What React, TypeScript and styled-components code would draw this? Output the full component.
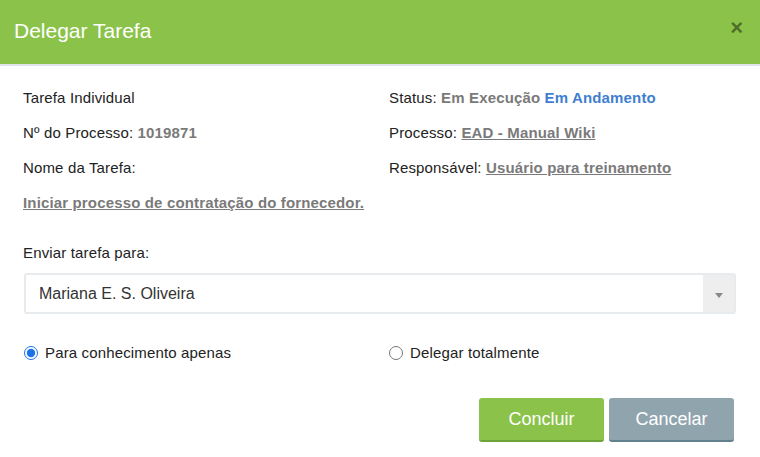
import React from "react";
import styled, { createGlobalStyle } from "styled-components";

const GlobalStyle = createGlobalStyle`
  html, body {
    margin: 0;
    padding: 0;
    background: #fff;
    font-family: "Liberation Sans", Arial, sans-serif;
  }
`;

const Modal = styled.div`
  width: 760px;
  height: 457px;
  background: #fff;
  display: flex;
  flex-direction: column;
`;

const Header = styled.div`
  height: 62px;
  background: #8bc34a;
  border-bottom: 2px solid #e1e4e8;
  display: flex;
  align-items: center;
  justify-content: space-between;
  padding: 0 14px 2px 14px;

  h1 {
    margin: 0;
    font-size: 21px;
    font-weight: 400;
    color: #fff;
  }
`;

const Close = styled.button`
  border: none;
  background: none;
  padding: 0;
  margin: -6px 3px 0 0;
  color: rgba(0, 0, 0, 0.45);
  font-family: "Liberation Sans", Arial, sans-serif;
  font-size: 22px;
  font-weight: 700;
  line-height: 1;
  cursor: pointer;
`;

const Body = styled.div`
  padding: 14px 25px 0 23px;
  display: flex;
  flex-direction: column;
  letter-spacing: 0.15px;
`;

const InfoGrid = styled.div`
  display: grid;
  grid-template-columns: 366px 1fr;
  grid-auto-rows: 35px;
  align-items: center;
  font-size: 15px;
  color: #222;
`;

const Value = styled.span<{ $blue?: boolean }>`
  font-weight: 700;
  color: ${(p) => (p.$blue ? "#3f7fcf" : "#7a7a7a")};
`;

const Link = styled.a`
  font-weight: 700;
  color: #7a7a7a;
  text-decoration: underline;
`;

const Label = styled.div`
  margin-top: 24px;
  font-size: 15px;
  color: #222;
`;

const Select = styled.div`
  margin: 12px 0 0 1px;
  height: 37px;
  width: 708px;
  border: 2px solid #e8ebee;
  border-radius: 3px;
  display: flex;
  align-items: stretch;
`;

const SelectText = styled.span`
  flex: 1;
  display: flex;
  align-items: center;
  padding-left: 13px;
  font-size: 16px;
  color: #333;
  letter-spacing: 0;
`;

const Arrow = styled.div`
  width: 31px;
  background: #eeeeee;
  display: flex;
  align-items: center;
  justify-content: center;

  &::after {
    content: "";
    border-left: 4px solid transparent;
    border-right: 4px solid transparent;
    border-top: 5px solid #888;
    margin-top: 3px;
  }
`;

const RadioRow = styled.div`
  margin-top: 30px;
  display: grid;
  grid-template-columns: 365px 1fr;
  font-size: 15px;
  color: #222;
`;

const RadioLabel = styled.label`
  display: flex;
  align-items: center;
  gap: 7px;

  input {
    margin: 0 0 0 1px;
    width: 14px;
    height: 14px;
    accent-color: #1a73e8;
  }
`;

const Footer = styled.div`
  margin-top: 37px;
  display: flex;
  justify-content: flex-end;
  gap: 5px;
  padding-right: 1px;
`;

const Button = styled.button<{ $variant: "primary" | "secondary" }>`
  width: 125px;
  height: 44px;
  border: none;
  border-radius: 3px;
  font-family: "Liberation Sans", Arial, sans-serif;
  font-size: 18px;
  letter-spacing: 0;
  color: #fff;
  background: ${(p) => (p.$variant === "primary" ? "#8bc34a" : "#90a4ae")};
  border-bottom: 2px solid
    ${(p) => (p.$variant === "primary" ? "#6ea33a" : "#62808e")};
  cursor: pointer;
`;

const App = () => {
  return (
    <>
      <GlobalStyle />
      <Modal>
        <Header>
          <h1>Delegar Tarefa</h1>
          <Close>×</Close>
        </Header>
        <Body>
          <InfoGrid>
            <div>Tarefa Individual</div>
            <div>
              Status: <Value>Em Execução</Value> <Value $blue>Em Andamento</Value>
            </div>
            <div>
              Nº do Processo: <Value>1019871</Value>
            </div>
            <div>
              Processo: <Link>EAD - Manual Wiki</Link>
            </div>
            <div>Nome da Tarefa:</div>
            <div>
              Responsável: <Link>Usuário para treinamento</Link>
            </div>
            <div>
              <Link>Iniciar processo de contratação do fornecedor.</Link>
            </div>
          </InfoGrid>
          <Label>Enviar tarefa para:</Label>
          <Select>
            <SelectText>Mariana E. S. Oliveira</SelectText>
            <Arrow />
          </Select>
          <RadioRow>
            <RadioLabel>
              <input type="radio" name="mode" defaultChecked />
              Para conhecimento apenas
            </RadioLabel>
            <RadioLabel>
              <input type="radio" name="mode" />
              Delegar totalmente
            </RadioLabel>
          </RadioRow>
          <Footer>
            <Button $variant="primary">Concluir</Button>
            <Button $variant="secondary">Cancelar</Button>
          </Footer>
        </Body>
      </Modal>
    </>
  );
};

export default App;
